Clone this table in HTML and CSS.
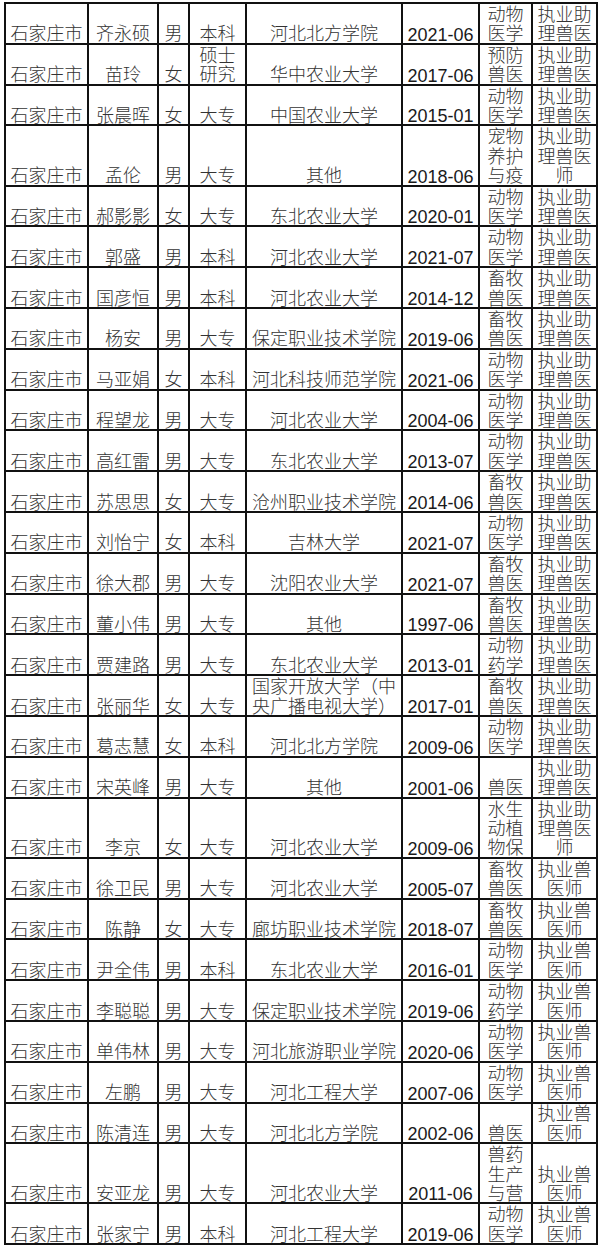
FILE: index.html
```html
<!DOCTYPE html>
<html lang="zh-CN">
<head>
<meta charset="utf-8">
<title>名单</title>
<link rel="stylesheet" href="styles.css">
</head>
<body>
<div class="sheet">
  <div class="row"><div>石家庄市</div><div>齐永硕</div><div>男</div><div>本科</div><div>河北北方学院</div><div class="num">2021-06</div><div>动物医学</div><div>执业助理兽医</div></div>
  <div class="row"><div>石家庄市</div><div>苗玲</div><div>女</div><div>硕士<br>研究</div><div>华中农业大学</div><div class="num">2017-06</div><div>预防兽医</div><div>执业助理兽医</div></div>
  <div class="row"><div>石家庄市</div><div>张晨晖</div><div>女</div><div>大专</div><div>中国农业大学</div><div class="num">2015-01</div><div>动物医学</div><div>执业助理兽医</div></div>
  <div class="row tall"><div>石家庄市</div><div>孟伦</div><div>男</div><div>大专</div><div>其他</div><div class="num">2018-06</div><div>宠物养护与疫</div><div>执业助理兽医师</div></div>
  <div class="row"><div>石家庄市</div><div>郝影影</div><div>女</div><div>大专</div><div>东北农业大学</div><div class="num">2020-01</div><div>动物医学</div><div>执业助理兽医</div></div>
  <div class="row"><div>石家庄市</div><div>郭盛</div><div>男</div><div>本科</div><div>河北农业大学</div><div class="num">2021-07</div><div>动物医学</div><div>执业助理兽医</div></div>
  <div class="row"><div>石家庄市</div><div>国彦恒</div><div>男</div><div>本科</div><div>河北农业大学</div><div class="num">2014-12</div><div>畜牧兽医</div><div>执业助理兽医</div></div>
  <div class="row"><div>石家庄市</div><div>杨安</div><div>男</div><div>大专</div><div>保定职业技术学院</div><div class="num">2019-06</div><div>畜牧兽医</div><div>执业助理兽医</div></div>
  <div class="row"><div>石家庄市</div><div>马亚娟</div><div>女</div><div>本科</div><div>河北科技师范学院</div><div class="num">2021-06</div><div>动物医学</div><div>执业助理兽医</div></div>
  <div class="row"><div>石家庄市</div><div>程望龙</div><div>男</div><div>大专</div><div>河北农业大学</div><div class="num">2004-06</div><div>动物医学</div><div>执业助理兽医</div></div>
  <div class="row"><div>石家庄市</div><div>高红雷</div><div>男</div><div>大专</div><div>东北农业大学</div><div class="num">2013-07</div><div>动物医学</div><div>执业助理兽医</div></div>
  <div class="row"><div>石家庄市</div><div>苏思思</div><div>女</div><div>大专</div><div>沧州职业技术学院</div><div class="num">2014-06</div><div>畜牧兽医</div><div>执业助理兽医</div></div>
  <div class="row"><div>石家庄市</div><div>刘怡宁</div><div>女</div><div>本科</div><div>吉林大学</div><div class="num">2021-07</div><div>动物医学</div><div>执业助理兽医</div></div>
  <div class="row"><div>石家庄市</div><div>徐大郡</div><div>男</div><div>大专</div><div>沈阳农业大学</div><div class="num">2021-07</div><div>畜牧兽医</div><div>执业助理兽医</div></div>
  <div class="row"><div>石家庄市</div><div>董小伟</div><div>男</div><div>大专</div><div>其他</div><div class="num">1997-06</div><div>畜牧兽医</div><div>执业助理兽医</div></div>
  <div class="row"><div>石家庄市</div><div>贾建路</div><div>男</div><div>大专</div><div>东北农业大学</div><div class="num">2013-01</div><div>动物药学</div><div>执业助理兽医</div></div>
  <div class="row"><div>石家庄市</div><div>张丽华</div><div>女</div><div>大专</div><div>国家开放大学（中<br>央广播电视大学）</div><div class="num">2017-01</div><div>畜牧兽医</div><div>执业助理兽医</div></div>
  <div class="row"><div>石家庄市</div><div>葛志慧</div><div>女</div><div>本科</div><div>河北北方学院</div><div class="num">2009-06</div><div>动物医学</div><div>执业助理兽医</div></div>
  <div class="row"><div>石家庄市</div><div>宋英峰</div><div>男</div><div>大专</div><div>其他</div><div class="num">2001-06</div><div>兽医</div><div>执业助理兽医</div></div>
  <div class="row tall"><div>石家庄市</div><div>李京</div><div>女</div><div>大专</div><div>河北农业大学</div><div class="num">2009-06</div><div>水生动植物保</div><div>执业助理兽医师</div></div>
  <div class="row"><div>石家庄市</div><div>徐卫民</div><div>男</div><div>大专</div><div>河北农业大学</div><div class="num">2005-07</div><div>畜牧兽医</div><div>执业兽医师</div></div>
  <div class="row"><div>石家庄市</div><div>陈静</div><div>女</div><div>大专</div><div>廊坊职业技术学院</div><div class="num">2018-07</div><div>畜牧兽医</div><div>执业兽医师</div></div>
  <div class="row"><div>石家庄市</div><div>尹全伟</div><div>男</div><div>本科</div><div>东北农业大学</div><div class="num">2016-01</div><div>动物医学</div><div>执业兽医师</div></div>
  <div class="row"><div>石家庄市</div><div>李聪聪</div><div>男</div><div>大专</div><div>保定职业技术学院</div><div class="num">2019-06</div><div>动物药学</div><div>执业兽医师</div></div>
  <div class="row"><div>石家庄市</div><div>单伟林</div><div>男</div><div>大专</div><div>河北旅游职业学院</div><div class="num">2020-06</div><div>动物医学</div><div>执业兽医师</div></div>
  <div class="row"><div>石家庄市</div><div>左鹏</div><div>男</div><div>大专</div><div>河北工程大学</div><div class="num">2007-06</div><div>动物医学</div><div>执业兽医师</div></div>
  <div class="row"><div>石家庄市</div><div>陈清连</div><div>男</div><div>大专</div><div>河北北方学院</div><div class="num">2002-06</div><div>兽医</div><div>执业兽医师</div></div>
  <div class="row tall"><div>石家庄市</div><div>安亚龙</div><div>男</div><div>大专</div><div>河北农业大学</div><div class="num">2011-06</div><div>兽药生产与营</div><div>执业兽医师</div></div>
  <div class="row"><div>石家庄市</div><div>张家宁</div><div>男</div><div>本科</div><div>河北工程大学</div><div class="num">2019-06</div><div>动物医学</div><div>执业兽医师</div></div>
</div>
</body>
</html>
```
FILE: styles.css
```css
html, body {
  margin: 0;
  padding: 0;
  background: #ffffff;
}

.sheet {
  margin: 2px 0 0 4px;
  width: 594px;
  box-sizing: border-box;
  border-top: 2px solid #111111;
  border-left: 2px solid #111111;
  font-family: "Noto Sans CJK SC", "Noto Sans CJK TC", sans-serif;
  font-weight: 300;
  font-size: 18px;
  line-height: 19.4px;
  color: #333333;
}

.row {
  display: grid;
  grid-template-columns: 83px 70px 31px 57px 156px 77px 53px 65px;
  grid-template-rows: minmax(0, 1fr);
  height: 40.8px;
}

.row.tall {
  height: 60.2px;
}

.row > div {
  min-width: 0;
  min-height: 0;
  border-right: 2px solid #111111;
  border-bottom: 2px solid #111111;
  overflow: hidden;
  display: flex;
  flex-direction: column;
  justify-content: flex-end;
  text-align: center;
  white-space: normal;
}

.row > .num {
  font-family: "Liberation Sans", Arial, sans-serif;
  font-weight: 400;
  line-height: 16px;
  color: #1a1a1a;
}
```
